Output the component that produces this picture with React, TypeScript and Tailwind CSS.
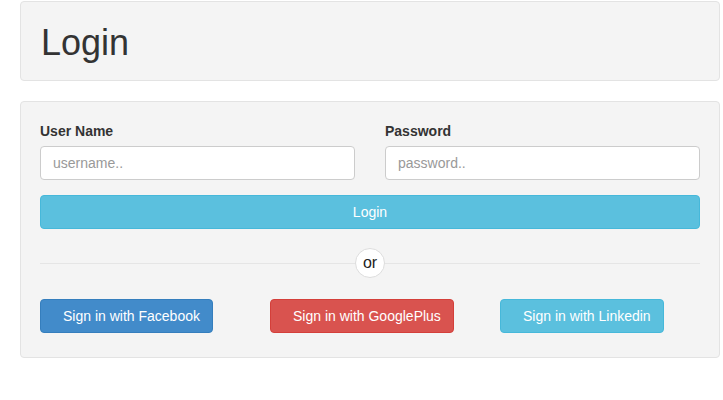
import { useState } from 'react';

const font = { fontFamily: '"Liberation Sans", Arial, sans-serif' };

export default function App() {
  const [user, setUser] = useState('');
  const [pass, setPass] = useState('');

  return (
    <div className="w-[723px] h-[400px] bg-white text-[#333] text-[14px] pl-[20px] pt-[1px]" style={font}>
      {/* ヘッダー */}
      <div className="w-[700px] h-[80px] flex items-center px-[20px] pt-[4px] bg-[#f4f4f4] border border-[#e3e3e3] rounded-[4px]">
        <h1 className="text-[36px] leading-none font-normal">Login</h1>
      </div>

      {/* フォーム */}
      <div className="mt-[20px] w-[700px] bg-[#f4f4f4] border border-[#e3e3e3] rounded-[4px] px-[19px] pt-[19px] pb-[24px]">
        <div className="grid grid-cols-2 gap-x-[30px]">
          <div>
            <label className="block font-bold leading-[20px] mb-[5px]">User Name</label>
            <input
              className="w-full h-[34px] px-[12px] bg-white border border-[#ccc] rounded-[4px] outline-none text-[14px] placeholder:text-[#999]"
              placeholder="username.."
              value={user}
              onChange={(e) => setUser(e.target.value)}
            />
          </div>
          <div>
            <label className="block font-bold leading-[20px] mb-[5px]">Password</label>
            <input
              type="password"
              className="w-full h-[34px] px-[12px] bg-white border border-[#ccc] rounded-[4px] outline-none text-[14px] placeholder:text-[#999]"
              placeholder="password.."
              value={pass}
              onChange={(e) => setPass(e.target.value)}
            />
          </div>
        </div>

        <button className="mt-[15px] w-full h-[34px] bg-[#5bc0de] border border-[#46b8da] rounded-[4px] text-white">
          Login
        </button>

        <div className="relative mt-[19px] h-[30px] flex items-center">
          <div className="w-full h-px bg-[#e5e5e5]" />
          <span className="absolute left-1/2 -translate-x-1/2 w-[30px] h-[30px] rounded-full bg-white border border-[#ddd] flex items-center justify-center text-[16px] leading-none text-[#222]">
            or
          </span>
        </div>

        <div className="mt-[21px] grid grid-cols-3 gap-x-[30px]">
          <div>
            <button className="h-[34px] pl-[22px] pr-[12px] bg-[#428bca] border border-[#357ebd] rounded-[4px] text-white">
              Sign in with Facebook
            </button>
          </div>
          <div>
            <button className="h-[34px] pl-[22px] pr-[12px] bg-[#d9534f] border border-[#d43f3a] rounded-[4px] text-white">
              Sign in with GooglePlus
            </button>
          </div>
          <div>
            <button className="h-[34px] pl-[22px] pr-[12px] bg-[#5bc0de] border border-[#46b8da] rounded-[4px] text-white">
              Sign in with Linkedin
            </button>
          </div>
        </div>
      </div>
    </div>
  );
}
